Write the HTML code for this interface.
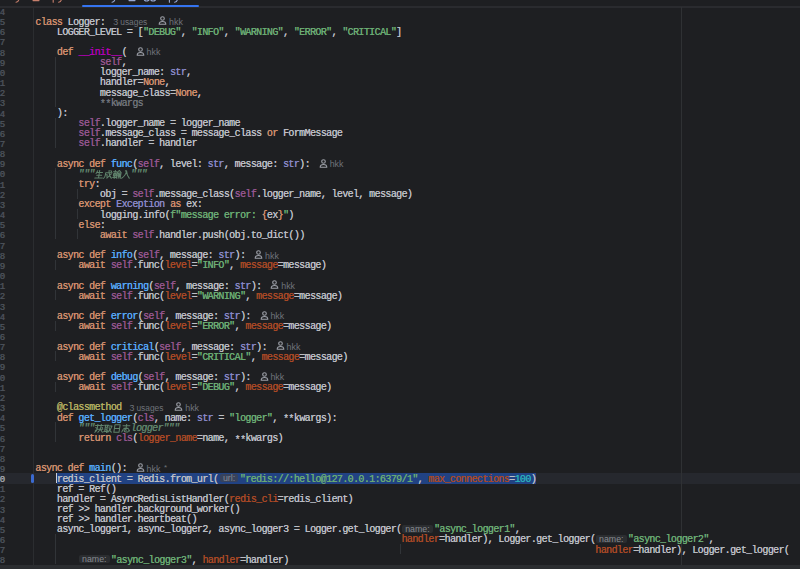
<!DOCTYPE html>
<html><head><meta charset="utf-8"><style>
html,body{margin:0;padding:0;width:800px;height:569px;overflow:hidden;background:#1E1F22;}
body{position:relative;font-family:"Liberation Mono",monospace;}
.t{position:absolute;white-space:pre;font-family:"Liberation Mono",monospace;font-size:10.0px;letter-spacing:-0.6150px;line-height:10px;height:10px;text-shadow:0.25px 0 0 currentColor;}
.it{font-style:italic;}
.ast{position:relative;top:1.6px;}
.ln{position:absolute;left:-40px;width:45px;text-align:right;white-space:pre;font-family:"Liberation Mono",monospace;font-size:9px;letter-spacing:0px;line-height:10px;color:#4B5059;text-shadow:0.3px 0 0 currentColor;}
.ln.cur{color:#A1A3AB;}
.g{position:absolute;width:1px;background:#313438;}
.ih{position:absolute;height:8px;background:#2B2D30;border-radius:2px;}
.ih.sel{background:#37425C;}
.ih span{position:absolute;left:3px;top:-0.9px;font-family:"Liberation Sans",sans-serif;font-size:8.8px;line-height:10px;color:#868A91;white-space:pre;}
.cvt{position:absolute;font-family:"Liberation Sans",sans-serif;font-size:8.9px;line-height:10px;color:#6F737A;white-space:pre;}
.cvt sup{font-size:6px;vertical-align:top;position:relative;top:-1px;}
.pi{position:absolute;}
.cjk{position:absolute;}
</style></head><body>
<div style="position:absolute;left:0;top:0;width:800px;height:6px;background:#1E1F22"></div>
<div style="position:absolute;left:0;top:6px;width:800px;height:1.6px;background:#2A2B2F"></div>
<div style="position:absolute;left:82px;top:5px;width:117px;height:2px;background:#3574F0;border-radius:1px"></div>
<div style="position:absolute;left:0;top:473.33px;width:800px;height:10.3px;background:#26282E"></div>
<div style="position:absolute;left:56.79px;top:473.33px;width:479.21px;height:10.3px;background:#214283"></div>
<div style="position:absolute;left:33px;top:7px;width:1px;height:558px;background:#2B2D30"></div>
<div style="position:absolute;left:681px;top:7px;width:1px;height:558px;background:#2F3134"></div>
<div style="position:absolute;left:31px;top:473.53px;width:3px;height:9px;background:#3B6AD0;border-radius:1.5px"></div>
<svg style="position:absolute;left:0;top:0" width="200" height="5" viewBox="0 0 200 5">
<g fill="none" stroke-linecap="round" stroke-width="1.1">
<g stroke="#C77F6C"><path d="M19 -1Q18.5 2 16 2.3"/><path d="M33 0.6H39"/><path d="M53.2 -1V2.2"/><path d="M61.6 -1Q61 2 58.6 2.3"/></g>
<g stroke="#98A9D4"><path d="M115 -1Q114.5 2 112 2.3"/><path d="M129 0.6H135"/><path d="M144.5 0.2Q146.5 1.8 148.8 0.2M151 0.2Q153 1.8 155.3 0.2"/><path d="M169.4 -1V2.2"/><path d="M177.6 -1Q177 2 174.6 2.3"/></g>
</g></svg>
<div class="g" style="left:55.19px;top:56.57px;height:50.77px"></div><div class="g" style="left:55.19px;top:117.51px;height:30.46px"></div><div class="g" style="left:55.19px;top:168.28px;height:71.08px"></div><div class="g" style="left:76.73px;top:188.59px;height:10.15px"></div><div class="g" style="left:76.73px;top:208.90px;height:10.15px"></div><div class="g" style="left:76.73px;top:229.21px;height:10.15px"></div><div class="g" style="left:55.19px;top:259.67px;height:10.15px"></div><div class="g" style="left:55.19px;top:290.14px;height:10.15px"></div><div class="g" style="left:55.19px;top:320.60px;height:10.15px"></div><div class="g" style="left:55.19px;top:351.07px;height:10.15px"></div><div class="g" style="left:55.19px;top:381.53px;height:10.15px"></div><div class="g" style="left:55.19px;top:422.15px;height:20.31px"></div><div class="g" style="left:55.19px;top:533.86px;height:30.46px"></div><div class="g" style="left:399.83px;top:544.01px;height:10.15px"></div>
<div class="ln" style="top:8.00px">4</div><div class="ln" style="top:18.16px">5</div><div class="t" style="left:35.25px;top:17.55px;color:#CF8E6D">class</div><div class="t" style="left:67.56px;top:17.55px;color:#BCBEC4">Logger:</div><div class="cvt" style="left:113.25px;top:16.95px">3</div><div class="cvt" style="left:120.25px;top:16.95px;font-size:8.4px">usages</div><svg class="pi" style="left:158.25px;top:16.36px" width="9" height="9" viewBox="0 0 9 9"><circle cx="4.5" cy="2.5" r="1.8" fill="none" stroke="#9DA0A8" stroke-width="1.1"/><path d="M1.2 8.3 L7.8 8.3 Q7.8 5.5 4.5 5.5 Q1.2 5.5 1.2 8.3 Z" fill="none" stroke="#9DA0A8" stroke-width="1.1" stroke-linejoin="round"/></svg><div class="cvt" style="left:169.06px;top:16.95px">hkk</div><div class="ln" style="top:28.31px">6</div><div class="t" style="left:56.79px;top:27.71px;color:#BCBEC4">LOGGER_LEVEL = [</div><div class="t" style="left:142.95px;top:27.71px;color:#6AAB73">&quot;DEBUG&quot;</div><div class="t" style="left:180.64px;top:27.71px;color:#BCBEC4">, </div><div class="t" style="left:191.41px;top:27.71px;color:#6AAB73">&quot;INFO&quot;</div><div class="t" style="left:223.72px;top:27.71px;color:#BCBEC4">, </div><div class="t" style="left:234.50px;top:27.71px;color:#6AAB73">&quot;WARNING&quot;</div><div class="t" style="left:282.96px;top:27.71px;color:#BCBEC4">, </div><div class="t" style="left:293.73px;top:27.71px;color:#6AAB73">&quot;ERROR&quot;</div><div class="t" style="left:331.43px;top:27.71px;color:#BCBEC4">, </div><div class="t" style="left:342.19px;top:27.71px;color:#6AAB73">&quot;CRITICAL&quot;</div><div class="t" style="left:396.04px;top:27.71px;color:#BCBEC4">]</div><div class="ln" style="top:38.46px">7</div><div class="ln" style="top:48.62px">8</div><div class="t" style="left:56.79px;top:48.02px;color:#CF8E6D">def</div><div class="t" style="left:78.33px;top:48.02px;color:#B200B2">__init__</div><div class="t" style="left:121.41px;top:48.02px;color:#BCBEC4">(</div><svg class="pi" style="left:135.80px;top:46.82px" width="9" height="9" viewBox="0 0 9 9"><circle cx="4.5" cy="2.5" r="1.8" fill="none" stroke="#9DA0A8" stroke-width="1.1"/><path d="M1.2 8.3 L7.8 8.3 Q7.8 5.5 4.5 5.5 Q1.2 5.5 1.2 8.3 Z" fill="none" stroke="#9DA0A8" stroke-width="1.1" stroke-linejoin="round"/></svg><div class="cvt" style="left:146.59px;top:47.42px">hkk</div><div class="ln" style="top:58.77px">9</div><div class="t" style="left:99.87px;top:58.17px;color:#94558D">self</div><div class="t" style="left:121.41px;top:58.17px;color:#BCBEC4">,</div><div class="ln" style="top:68.93px">10</div><div class="t" style="left:99.87px;top:68.33px;color:#BCBEC4">logger_name: </div><div class="t" style="left:169.88px;top:68.33px;color:#8888C6">str</div><div class="t" style="left:186.03px;top:68.33px;color:#BCBEC4">,</div><div class="ln" style="top:79.08px">11</div><div class="t" style="left:99.87px;top:78.48px;color:#BCBEC4">handler=</div><div class="t" style="left:142.95px;top:78.48px;color:#CF8E6D">None</div><div class="t" style="left:164.49px;top:78.48px;color:#BCBEC4">,</div><div class="ln" style="top:89.24px">12</div><div class="t" style="left:99.87px;top:88.64px;color:#BCBEC4">message_class=</div><div class="t" style="left:175.26px;top:88.64px;color:#CF8E6D">None</div><div class="t" style="left:196.80px;top:88.64px;color:#BCBEC4">,</div><div class="ln" style="top:99.39px">13</div><div class="t" style="left:99.87px;top:98.80px;color:#6F737A"><span class="ast">*</span><span class="ast">*</span>kwargs</div><div class="ln" style="top:109.55px">14</div><div class="t" style="left:56.79px;top:108.95px;color:#BCBEC4">):</div><div class="ln" style="top:119.70px">15</div><div class="t" style="left:78.33px;top:119.11px;color:#94558D">self</div><div class="t" style="left:99.87px;top:119.11px;color:#BCBEC4">.logger_name = logger_name</div><div class="ln" style="top:129.86px">16</div><div class="t" style="left:78.33px;top:129.26px;color:#94558D">self</div><div class="t" style="left:99.87px;top:129.26px;color:#BCBEC4">.message_class = message_class </div><div class="t" style="left:266.80px;top:129.26px;color:#CF8E6D">or</div><div class="t" style="left:282.96px;top:129.26px;color:#BCBEC4">FormMessage</div><div class="ln" style="top:140.01px">17</div><div class="t" style="left:78.33px;top:139.41px;color:#94558D">self</div><div class="t" style="left:99.87px;top:139.41px;color:#BCBEC4">.handler = handler</div><div class="ln" style="top:150.17px">18</div><div class="ln" style="top:160.32px">19</div><div class="t" style="left:56.79px;top:159.72px;color:#CF8E6D">async</div><div class="t" style="left:89.10px;top:159.72px;color:#CF8E6D">def</div><div class="t" style="left:110.64px;top:159.72px;color:#56A8F5">func</div><div class="t" style="left:132.18px;top:159.72px;color:#BCBEC4">(</div><div class="t" style="left:137.56px;top:159.72px;color:#94558D">self</div><div class="t" style="left:159.10px;top:159.72px;color:#BCBEC4">, level: </div><div class="t" style="left:207.57px;top:159.72px;color:#8888C6">str</div><div class="t" style="left:223.72px;top:159.72px;color:#BCBEC4">, message: </div><div class="t" style="left:282.96px;top:159.72px;color:#8888C6">str</div><div class="t" style="left:299.12px;top:159.72px;color:#BCBEC4">):</div><svg class="pi" style="left:318.88px;top:158.53px" width="9" height="9" viewBox="0 0 9 9"><circle cx="4.5" cy="2.5" r="1.8" fill="none" stroke="#9DA0A8" stroke-width="1.1"/><path d="M1.2 8.3 L7.8 8.3 Q7.8 5.5 4.5 5.5 Q1.2 5.5 1.2 8.3 Z" fill="none" stroke="#9DA0A8" stroke-width="1.1" stroke-linejoin="round"/></svg><div class="cvt" style="left:329.69px;top:159.12px">hkk</div><div class="ln" style="top:170.48px">20</div><div class="t it" style="left:78.33px;top:169.88px;color:#5F826B">&quot;&quot;&quot;</div><div class="t it" style="left:130.59px;top:169.88px;color:#5F826B">"""</div><svg class="cjk" style="left:94.19px;top:169.78px" width="38.0" height="10" viewBox="0 0 38.0 10"><g transform="translate(0.8,0) skewX(-9)" fill="none" stroke="#5F826B" stroke-width="1.2" stroke-linecap="round" stroke-linejoin="round"><path transform="translate(0.6,0) scale(0.86,0.86)" d="M2.8 0.8L1.4 4.2M2 3H8.8M2.4 6H8.2M0.8 9.4H9.6M5.1 0.4V9.4"/><path transform="translate(9.6,0) scale(0.86,0.86)" d="M2 3.2V6.2Q2 8.6 0.6 9.8M2 3.2H9.4M2 5.6H4.2V8.2M5.6 0.4Q5.8 6.4 9.6 9.6M8.8 4.6L4.4 9.4M7.6 0.8L8.6 1.9"/><path transform="translate(18.6,0) scale(0.86,0.86)" d="M0.4 2H4.2M1 4H3.8V7H1V4M2.4 0.4V9.8M0.4 8.6H4.2M7 0.4L4.6 3.2M7 0.4L9.6 3.2M5.6 3.6H8.4M5 4.6V9.6M5 4.6H7V9.6M5 6.8H7M8.2 4.6V8.2M9.4 4V9.8"/><path transform="translate(27.6,0) scale(0.86,0.86)" d="M5 1.2Q5 6.4 0.6 9.6M3.6 1H5Q6 6.2 9.6 9.6"/></g></svg><div class="ln" style="top:180.63px">21</div><div class="t" style="left:78.33px;top:180.03px;color:#CF8E6D">try</div><div class="t" style="left:94.48px;top:180.03px;color:#BCBEC4">:</div><div class="ln" style="top:190.79px">22</div><div class="t" style="left:99.87px;top:190.19px;color:#BCBEC4">obj = </div><div class="t" style="left:132.18px;top:190.19px;color:#94558D">self</div><div class="t" style="left:153.72px;top:190.19px;color:#BCBEC4">.message_class(</div><div class="t" style="left:234.50px;top:190.19px;color:#94558D">self</div><div class="t" style="left:256.03px;top:190.19px;color:#BCBEC4">.logger_name, level, message)</div><div class="ln" style="top:200.94px">23</div><div class="t" style="left:78.33px;top:200.34px;color:#CF8E6D">except</div><div class="t" style="left:116.02px;top:200.34px;color:#8888C6">Exception</div><div class="t" style="left:169.88px;top:200.34px;color:#CF8E6D">as</div><div class="t" style="left:186.03px;top:200.34px;color:#BCBEC4">ex:</div><div class="ln" style="top:211.10px">24</div><div class="t" style="left:99.87px;top:210.50px;color:#BCBEC4">logging.info(</div><div class="t" style="left:169.88px;top:210.50px;color:#6AAB73">f&quot;message error: </div><div class="t" style="left:261.42px;top:210.50px;color:#CF8E6D">{</div><div class="t" style="left:266.80px;top:210.50px;color:#BCBEC4">ex</div><div class="t" style="left:277.57px;top:210.50px;color:#CF8E6D">}</div><div class="t" style="left:282.96px;top:210.50px;color:#6AAB73">&quot;</div><div class="t" style="left:288.35px;top:210.50px;color:#BCBEC4">)</div><div class="ln" style="top:221.25px">25</div><div class="t" style="left:78.33px;top:220.66px;color:#CF8E6D">else</div><div class="t" style="left:99.87px;top:220.66px;color:#BCBEC4">:</div><div class="ln" style="top:231.41px">26</div><div class="t" style="left:99.87px;top:230.81px;color:#CF8E6D">await</div><div class="t" style="left:132.18px;top:230.81px;color:#94558D">self</div><div class="t" style="left:153.72px;top:230.81px;color:#BCBEC4">.handler.push(obj.to_dict())</div><div class="ln" style="top:241.56px">27</div><div class="ln" style="top:251.72px">28</div><div class="t" style="left:56.79px;top:251.12px;color:#CF8E6D">async</div><div class="t" style="left:89.10px;top:251.12px;color:#CF8E6D">def</div><div class="t" style="left:110.64px;top:251.12px;color:#56A8F5">info</div><div class="t" style="left:132.18px;top:251.12px;color:#BCBEC4">(</div><div class="t" style="left:137.56px;top:251.12px;color:#94558D">self</div><div class="t" style="left:159.10px;top:251.12px;color:#BCBEC4">, message: </div><div class="t" style="left:218.34px;top:251.12px;color:#8888C6">str</div><div class="t" style="left:234.50px;top:251.12px;color:#BCBEC4">):</div><svg class="pi" style="left:254.26px;top:249.92px" width="9" height="9" viewBox="0 0 9 9"><circle cx="4.5" cy="2.5" r="1.8" fill="none" stroke="#9DA0A8" stroke-width="1.1"/><path d="M1.2 8.3 L7.8 8.3 Q7.8 5.5 4.5 5.5 Q1.2 5.5 1.2 8.3 Z" fill="none" stroke="#9DA0A8" stroke-width="1.1" stroke-linejoin="round"/></svg><div class="cvt" style="left:265.06px;top:250.52px">hkk</div><div class="ln" style="top:261.88px">29</div><div class="t" style="left:78.33px;top:261.27px;color:#CF8E6D">await</div><div class="t" style="left:110.64px;top:261.27px;color:#94558D">self</div><div class="t" style="left:132.18px;top:261.27px;color:#BCBEC4">.func(</div><div class="t" style="left:164.49px;top:261.27px;color:#AA4926">level</div><div class="t" style="left:191.41px;top:261.27px;color:#BCBEC4">=</div><div class="t" style="left:196.80px;top:261.27px;color:#6AAB73">&quot;INFO&quot;</div><div class="t" style="left:229.11px;top:261.27px;color:#BCBEC4">, </div><div class="t" style="left:239.88px;top:261.27px;color:#AA4926">message</div><div class="t" style="left:277.57px;top:261.27px;color:#BCBEC4">=message)</div><div class="ln" style="top:272.03px">30</div><div class="ln" style="top:282.19px">31</div><div class="t" style="left:56.79px;top:281.58px;color:#CF8E6D">async</div><div class="t" style="left:89.10px;top:281.58px;color:#CF8E6D">def</div><div class="t" style="left:110.64px;top:281.58px;color:#56A8F5">warning</div><div class="t" style="left:148.33px;top:281.58px;color:#BCBEC4">(</div><div class="t" style="left:153.72px;top:281.58px;color:#94558D">self</div><div class="t" style="left:175.26px;top:281.58px;color:#BCBEC4">, message: </div><div class="t" style="left:234.50px;top:281.58px;color:#8888C6">str</div><div class="t" style="left:250.65px;top:281.58px;color:#BCBEC4">):</div><svg class="pi" style="left:270.42px;top:280.38px" width="9" height="9" viewBox="0 0 9 9"><circle cx="4.5" cy="2.5" r="1.8" fill="none" stroke="#9DA0A8" stroke-width="1.1"/><path d="M1.2 8.3 L7.8 8.3 Q7.8 5.5 4.5 5.5 Q1.2 5.5 1.2 8.3 Z" fill="none" stroke="#9DA0A8" stroke-width="1.1" stroke-linejoin="round"/></svg><div class="cvt" style="left:281.22px;top:280.98px">hkk</div><div class="ln" style="top:292.34px">32</div><div class="t" style="left:78.33px;top:291.74px;color:#CF8E6D">await</div><div class="t" style="left:110.64px;top:291.74px;color:#94558D">self</div><div class="t" style="left:132.18px;top:291.74px;color:#BCBEC4">.func(</div><div class="t" style="left:164.49px;top:291.74px;color:#AA4926">level</div><div class="t" style="left:191.41px;top:291.74px;color:#BCBEC4">=</div><div class="t" style="left:196.80px;top:291.74px;color:#6AAB73">&quot;WARNING&quot;</div><div class="t" style="left:245.26px;top:291.74px;color:#BCBEC4">, </div><div class="t" style="left:256.03px;top:291.74px;color:#AA4926">message</div><div class="t" style="left:293.73px;top:291.74px;color:#BCBEC4">=message)</div><div class="ln" style="top:302.50px">33</div><div class="ln" style="top:312.65px">34</div><div class="t" style="left:56.79px;top:312.05px;color:#CF8E6D">async</div><div class="t" style="left:89.10px;top:312.05px;color:#CF8E6D">def</div><div class="t" style="left:110.64px;top:312.05px;color:#56A8F5">error</div><div class="t" style="left:137.56px;top:312.05px;color:#BCBEC4">(</div><div class="t" style="left:142.95px;top:312.05px;color:#94558D">self</div><div class="t" style="left:164.49px;top:312.05px;color:#BCBEC4">, message: </div><div class="t" style="left:223.72px;top:312.05px;color:#8888C6">str</div><div class="t" style="left:239.88px;top:312.05px;color:#BCBEC4">):</div><svg class="pi" style="left:259.65px;top:310.85px" width="9" height="9" viewBox="0 0 9 9"><circle cx="4.5" cy="2.5" r="1.8" fill="none" stroke="#9DA0A8" stroke-width="1.1"/><path d="M1.2 8.3 L7.8 8.3 Q7.8 5.5 4.5 5.5 Q1.2 5.5 1.2 8.3 Z" fill="none" stroke="#9DA0A8" stroke-width="1.1" stroke-linejoin="round"/></svg><div class="cvt" style="left:270.45px;top:311.45px">hkk</div><div class="ln" style="top:322.81px">35</div><div class="t" style="left:78.33px;top:322.20px;color:#CF8E6D">await</div><div class="t" style="left:110.64px;top:322.20px;color:#94558D">self</div><div class="t" style="left:132.18px;top:322.20px;color:#BCBEC4">.func(</div><div class="t" style="left:164.49px;top:322.20px;color:#AA4926">level</div><div class="t" style="left:191.41px;top:322.20px;color:#BCBEC4">=</div><div class="t" style="left:196.80px;top:322.20px;color:#6AAB73">&quot;ERROR&quot;</div><div class="t" style="left:234.50px;top:322.20px;color:#BCBEC4">, </div><div class="t" style="left:245.26px;top:322.20px;color:#AA4926">message</div><div class="t" style="left:282.96px;top:322.20px;color:#BCBEC4">=message)</div><div class="ln" style="top:332.96px">36</div><div class="ln" style="top:343.11px">37</div><div class="t" style="left:56.79px;top:342.51px;color:#CF8E6D">async</div><div class="t" style="left:89.10px;top:342.51px;color:#CF8E6D">def</div><div class="t" style="left:110.64px;top:342.51px;color:#56A8F5">critical</div><div class="t" style="left:153.72px;top:342.51px;color:#BCBEC4">(</div><div class="t" style="left:159.10px;top:342.51px;color:#94558D">self</div><div class="t" style="left:180.64px;top:342.51px;color:#BCBEC4">, message: </div><div class="t" style="left:239.88px;top:342.51px;color:#8888C6">str</div><div class="t" style="left:256.03px;top:342.51px;color:#BCBEC4">):</div><svg class="pi" style="left:275.80px;top:341.31px" width="9" height="9" viewBox="0 0 9 9"><circle cx="4.5" cy="2.5" r="1.8" fill="none" stroke="#9DA0A8" stroke-width="1.1"/><path d="M1.2 8.3 L7.8 8.3 Q7.8 5.5 4.5 5.5 Q1.2 5.5 1.2 8.3 Z" fill="none" stroke="#9DA0A8" stroke-width="1.1" stroke-linejoin="round"/></svg><div class="cvt" style="left:286.60px;top:341.91px">hkk</div><div class="ln" style="top:353.27px">38</div><div class="t" style="left:78.33px;top:352.67px;color:#CF8E6D">await</div><div class="t" style="left:110.64px;top:352.67px;color:#94558D">self</div><div class="t" style="left:132.18px;top:352.67px;color:#BCBEC4">.func(</div><div class="t" style="left:164.49px;top:352.67px;color:#AA4926">level</div><div class="t" style="left:191.41px;top:352.67px;color:#BCBEC4">=</div><div class="t" style="left:196.80px;top:352.67px;color:#6AAB73">&quot;CRITICAL&quot;</div><div class="t" style="left:250.65px;top:352.67px;color:#BCBEC4">, </div><div class="t" style="left:261.42px;top:352.67px;color:#AA4926">message</div><div class="t" style="left:299.12px;top:352.67px;color:#BCBEC4">=message)</div><div class="ln" style="top:363.42px">39</div><div class="ln" style="top:373.58px">40</div><div class="t" style="left:56.79px;top:372.98px;color:#CF8E6D">async</div><div class="t" style="left:89.10px;top:372.98px;color:#CF8E6D">def</div><div class="t" style="left:110.64px;top:372.98px;color:#56A8F5">debug</div><div class="t" style="left:137.56px;top:372.98px;color:#BCBEC4">(</div><div class="t" style="left:142.95px;top:372.98px;color:#94558D">self</div><div class="t" style="left:164.49px;top:372.98px;color:#BCBEC4">, message: </div><div class="t" style="left:223.72px;top:372.98px;color:#8888C6">str</div><div class="t" style="left:239.88px;top:372.98px;color:#BCBEC4">):</div><svg class="pi" style="left:259.65px;top:371.78px" width="9" height="9" viewBox="0 0 9 9"><circle cx="4.5" cy="2.5" r="1.8" fill="none" stroke="#9DA0A8" stroke-width="1.1"/><path d="M1.2 8.3 L7.8 8.3 Q7.8 5.5 4.5 5.5 Q1.2 5.5 1.2 8.3 Z" fill="none" stroke="#9DA0A8" stroke-width="1.1" stroke-linejoin="round"/></svg><div class="cvt" style="left:270.45px;top:372.38px">hkk</div><div class="ln" style="top:383.73px">41</div><div class="t" style="left:78.33px;top:383.13px;color:#CF8E6D">await</div><div class="t" style="left:110.64px;top:383.13px;color:#94558D">self</div><div class="t" style="left:132.18px;top:383.13px;color:#BCBEC4">.func(</div><div class="t" style="left:164.49px;top:383.13px;color:#AA4926">level</div><div class="t" style="left:191.41px;top:383.13px;color:#BCBEC4">=</div><div class="t" style="left:196.80px;top:383.13px;color:#6AAB73">&quot;DEBUG&quot;</div><div class="t" style="left:234.50px;top:383.13px;color:#BCBEC4">, </div><div class="t" style="left:245.26px;top:383.13px;color:#AA4926">message</div><div class="t" style="left:282.96px;top:383.13px;color:#BCBEC4">=message)</div><div class="ln" style="top:393.89px">42</div><div class="ln" style="top:404.04px">43</div><div class="t" style="left:56.79px;top:403.44px;color:#B3AE60">@classmethod</div><div class="cvt" style="left:129.41px;top:402.84px">3</div><div class="cvt" style="left:136.41px;top:402.84px;font-size:8.4px">usages</div><svg class="pi" style="left:174.41px;top:402.24px" width="9" height="9" viewBox="0 0 9 9"><circle cx="4.5" cy="2.5" r="1.8" fill="none" stroke="#9DA0A8" stroke-width="1.1"/><path d="M1.2 8.3 L7.8 8.3 Q7.8 5.5 4.5 5.5 Q1.2 5.5 1.2 8.3 Z" fill="none" stroke="#9DA0A8" stroke-width="1.1" stroke-linejoin="round"/></svg><div class="cvt" style="left:185.21px;top:402.84px">hkk</div><div class="ln" style="top:414.20px">44</div><div class="t" style="left:56.79px;top:413.60px;color:#CF8E6D">def</div><div class="t" style="left:78.33px;top:413.60px;color:#56A8F5">get_logger</div><div class="t" style="left:132.18px;top:413.60px;color:#BCBEC4">(</div><div class="t" style="left:137.56px;top:413.60px;color:#94558D">cls</div><div class="t" style="left:153.72px;top:413.60px;color:#BCBEC4">, name: </div><div class="t" style="left:196.80px;top:413.60px;color:#8888C6">str</div><div class="t" style="left:218.34px;top:413.60px;color:#BCBEC4">= </div><div class="t" style="left:229.11px;top:413.60px;color:#6AAB73">&quot;logger&quot;</div><div class="t" style="left:272.19px;top:413.60px;color:#BCBEC4">, <span class="ast">*</span><span class="ast">*</span>kwargs):</div><div class="ln" style="top:424.35px">45</div><div class="t it" style="left:78.33px;top:423.75px;color:#5F826B">&quot;&quot;&quot;</div><div class="t it" style="left:130.59px;top:423.75px;color:#5F826B">logger"""</div><svg class="cjk" style="left:94.19px;top:423.65px" width="38.0" height="10" viewBox="0 0 38.0 10"><g transform="translate(0.8,0) skewX(-9)" fill="none" stroke="#5F826B" stroke-width="1.2" stroke-linecap="round" stroke-linejoin="round"><path transform="translate(0.6,0) scale(0.86,0.86)" d="M0.4 1.8H9.6M3 0.3V3.2M7 0.3V3.2M1 4L3.2 5.6M3.2 4Q3.2 8 0.8 9.6M1 7.4L3.6 6.2M4.4 6H9.6M7 3.6Q7 7.4 4.4 9.6M7.2 6.6L9.6 9.6M8.4 4L9.2 4.9"/><path transform="translate(9.6,0) scale(0.86,0.86)" d="M0.4 1.4H5.2M1.6 1.4V8.6M4 1.4V9.8M1.6 3.9H4M1.6 6.2H4M0.4 9L5.2 8M5.6 2.4H9.2Q8.4 7 5.4 9.6M6 4Q7 8 9.6 9.6"/><path transform="translate(18.6,0) scale(0.86,0.86)" d="M2 0.9H8V9.5H2ZM2 5.2H8"/><path transform="translate(27.6,0) scale(0.86,0.86)" d="M1 2H9M5 0.3V5.1M2.4 5.1H7.6M0.8 9.2L1.6 6.6M3 6Q3 9.4 5.8 9.4H7.8L8.4 8M4.6 6L5.6 7.4M8.4 6.4L9.6 8.2"/></g></svg><div class="ln" style="top:434.51px">46</div><div class="t" style="left:78.33px;top:433.91px;color:#CF8E6D">return</div><div class="t" style="left:116.02px;top:433.91px;color:#94558D">cls</div><div class="t" style="left:132.18px;top:433.91px;color:#BCBEC4">(</div><div class="t" style="left:137.56px;top:433.91px;color:#AA4926">logger_name</div><div class="t" style="left:196.80px;top:433.91px;color:#BCBEC4">=name, <span class="ast">*</span><span class="ast">*</span>kwargs)</div><div class="ln" style="top:444.66px">47</div><div class="ln" style="top:454.82px">48</div><div class="ln" style="top:464.97px">49</div><div class="t" style="left:35.25px;top:464.37px;color:#CF8E6D">async</div><div class="t" style="left:67.56px;top:464.37px;color:#CF8E6D">def</div><div class="t" style="left:89.10px;top:464.37px;color:#56A8F5">main</div><div class="t" style="left:110.64px;top:464.37px;color:#BCBEC4">():</div><svg class="pi" style="left:135.80px;top:463.17px" width="9" height="9" viewBox="0 0 9 9"><circle cx="4.5" cy="2.5" r="1.8" fill="none" stroke="#9DA0A8" stroke-width="1.1"/><path d="M1.2 8.3 L7.8 8.3 Q7.8 5.5 4.5 5.5 Q1.2 5.5 1.2 8.3 Z" fill="none" stroke="#9DA0A8" stroke-width="1.1" stroke-linejoin="round"/></svg><div class="cvt" style="left:146.59px;top:463.77px">hkk</div><div class="cvt" style="left:164.09px;top:463.07px;font-size:8px">*</div><div class="ln cur" style="top:475.13px">50</div><div class="t" style="left:56.79px;top:474.53px;color:#BCBEC4">redis_client = Redis.from_url(</div><div class="t" style="left:239.84px;top:474.53px;color:#6AAB73">&quot;redis://:hello@127.0.0.1:6379/1&quot;</div><div class="t" style="left:417.54px;top:474.53px;color:#BCBEC4">, </div><div class="t" style="left:428.31px;top:474.53px;color:#AA4926">max_connections</div><div class="t" style="left:509.09px;top:474.53px;color:#BCBEC4">=</div><div class="t" style="left:514.47px;top:474.53px;color:#2AACB8">100</div><div class="t" style="left:530.63px;top:474.53px;color:#BCBEC4">)</div><div class="ih sel" style="left:219.89px;top:474.03px;width:18.4px"><span>url:</span></div><div class="ln" style="top:485.28px">51</div><div class="t" style="left:56.79px;top:484.68px;color:#BCBEC4">ref = Ref()</div><div class="ln" style="top:495.44px">52</div><div class="t" style="left:56.79px;top:494.84px;color:#BCBEC4">handler = AsyncRedisListHandler(</div><div class="t" style="left:229.11px;top:494.84px;color:#AA4926">redis_cli</div><div class="t" style="left:277.57px;top:494.84px;color:#BCBEC4">=redis_client)</div><div class="ln" style="top:505.59px">53</div><div class="t" style="left:56.79px;top:504.99px;color:#BCBEC4">ref &gt;&gt; handler.background_worker()</div><div class="ln" style="top:515.75px">54</div><div class="t" style="left:56.79px;top:515.15px;color:#BCBEC4">ref &gt;&gt; handler.heartbeat()</div><div class="ln" style="top:525.90px">55</div><div class="t" style="left:56.79px;top:525.30px;color:#BCBEC4">async_logger1, async_logger2, async_logger3 = Logger.get_logger(</div><div class="t" style="left:433.93px;top:525.30px;color:#6AAB73">&quot;async_logger1&quot;</div><div class="t" style="left:514.70px;top:525.30px;color:#BCBEC4">,</div><div class="ih" style="left:402.18px;top:524.80px;width:31px"><span>name:</span></div><div class="ln" style="top:536.06px">56</div><div class="t" style="left:401.43px;top:535.46px;color:#AA4926">handler</div><div class="t" style="left:439.12px;top:535.46px;color:#BCBEC4">=handler), Logger.get_logger(</div><div class="t" style="left:627.79px;top:535.46px;color:#6AAB73">&quot;async_logger2&quot;</div><div class="t" style="left:708.56px;top:535.46px;color:#BCBEC4">,</div><div class="ih" style="left:596.04px;top:534.96px;width:31px"><span>name:</span></div><div class="ln" style="top:546.21px">57</div><div class="t" style="left:595.29px;top:545.61px;color:#AA4926">handler</div><div class="t" style="left:632.99px;top:545.61px;color:#BCBEC4">=handler), Logger.get_logger(</div><div class="ln" style="top:556.37px">58</div><div class="t" style="left:110.83px;top:555.77px;color:#6AAB73">&quot;async_logger3&quot;</div><div class="t" style="left:191.60px;top:555.77px;color:#BCBEC4">, </div><div class="t" style="left:202.38px;top:555.77px;color:#AA4926">handler</div><div class="t" style="left:240.07px;top:555.77px;color:#BCBEC4">=handler)</div><div class="ih" style="left:79.08px;top:555.27px;width:31px"><span>name:</span></div>
<div style="position:absolute;left:56.19px;top:472.93px;width:1px;height:10.15px;background:#CED0D6"></div>
<div style="position:absolute;left:0;top:565px;width:800px;height:4px;background:#2B2D30"></div>
</body></html>
